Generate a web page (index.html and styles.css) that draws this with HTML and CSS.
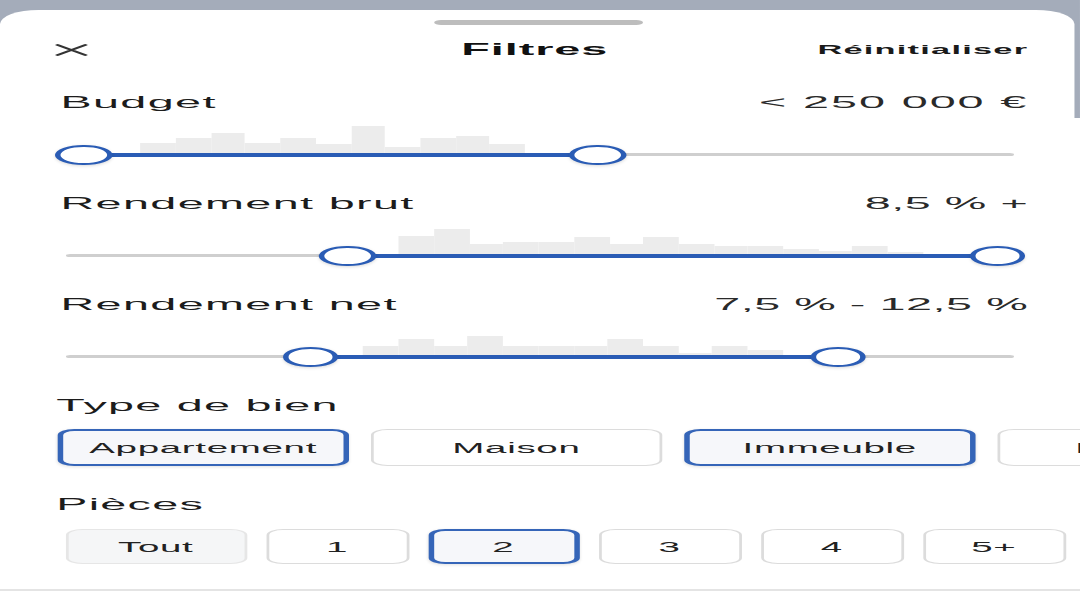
FILE: index.html
```html
<!DOCTYPE html>
<html lang="fr">
<head>
    <meta charset="UTF-8">
    <meta name="viewport" content="width=device-width, initial-scale=1.0">
    <title>Filtres</title>
    <link rel="stylesheet" href="styles.css">
</head>
<body>
    <!-- phone screen, stretched to the window width -->
    <div class="stage">
        <div class="sheet">
            <div class="grabber"></div>

            <header class="topbar">
                <button class="close" aria-label="Fermer">
                    <svg viewBox="0 0 12 12" width="12" height="12"><path d="M1 1 L11 11 M11 1 L1 11"/></svg>
                </button>
                <h1>Filtres</h1>
                <button class="reset">Réinitialiser</button>
            </header>

            <section class="filter first">
                <div class="filter-head">
                    <span class="filter-label">Budget</span>
                    <span class="filter-value money">&lt; 250 000 €</span>
                </div>
                <div class="slider">
                    <div class="rail">
                        <div class="hist" style="left:21px">
                            <i style="height:10px"></i><i style="height:15px"></i><i style="height:20px"></i><i style="height:10px"></i><i style="height:15px"></i><i style="height:9px"></i><i style="height:27px"></i><i style="height:6px"></i><i style="height:15px"></i><i style="height:17px"></i><i style="height:9px"></i>
                        </div>
                        <div class="track"></div>
                        <div class="range" style="left:0%;right:43.5%"></div>
                        <div class="thumb" style="left:0%"></div>
                        <div class="thumb" style="left:56.5%"></div>
                    </div>
                </div>
            </section>

            <section class="filter">
                <div class="filter-head">
                    <span class="filter-label">Rendement brut</span>
                    <span class="filter-value">8,5 % +</span>
                </div>
                <div class="slider">
                    <div class="rail">
                        <div class="hist" style="left:115px">
                            <i style="height:18px"></i><i style="height:25px"></i><i style="height:10px"></i><i style="height:12px"></i><i style="height:12px"></i><i style="height:17px"></i><i style="height:10px"></i><i style="height:17px"></i><i style="height:10px"></i><i style="height:8px"></i><i style="height:8px"></i><i style="height:5px"></i><i style="height:3px"></i><i style="height:8px"></i><i style="height:2px"></i>
                        </div>
                        <div class="track"></div>
                        <div class="range" style="left:29%;right:0%"></div>
                        <div class="thumb" style="left:29%"></div>
                        <div class="thumb" style="left:100.5%"></div>
                    </div>
                </div>
            </section>

            <section class="filter">
                <div class="filter-head">
                    <span class="filter-label">Rendement net</span>
                    <span class="filter-value">7,5 % - 12,5 %</span>
                </div>
                <div class="slider">
                    <div class="rail">
                        <div class="hist" style="left:102px">
                            <i style="height:9px"></i><i style="height:16px"></i><i style="height:9px"></i><i style="height:19px"></i><i style="height:9px"></i><i style="height:9px"></i><i style="height:9px"></i><i style="height:16px"></i><i style="height:9px"></i><i style="height:2px"></i><i style="height:9px"></i><i style="height:5px"></i>
                        </div>
                        <div class="track"></div>
                        <div class="range" style="left:25%;right:17%"></div>
                        <div class="thumb" style="left:25%"></div>
                        <div class="thumb" style="left:83%"></div>
                    </div>
                </div>
            </section>

            <section class="choice">
                <h2 class="choice-label">Type de bien</h2>
                <div class="chips">
                    <button class="chip wide active">Appartement</button>
                    <button class="chip wide">Maison</button>
                    <button class="chip wide active">Immeuble</button>
                    <button class="chip wide">Parking</button>
                </div>
            </section>

            <section class="choice">
                <h2 class="choice-label">Pièces</h2>
                <div class="chips rooms">
                    <button class="chip all">Tout</button>
                    <button class="chip">1</button>
                    <button class="chip active">2</button>
                    <button class="chip">3</button>
                    <button class="chip">4</button>
                    <button class="chip">5+</button>
                    <button class="chip">6+</button>
                </div>
            </section>

            <div class="divider"></div>
        </div>
    </div>
</body>
</html>
```

FILE: styles.css
```css
body {
    margin: 0;
    background: #ffffff;
    font-family: 'Liberation Sans', Arial, sans-serif;
    color: #1c1c1c;
    overflow: hidden;
}

/* the screenshot is a 393px wide phone screen stretched to 1080 */
.stage {
    width: 393px;
    height: 600px;
    transform: scaleX(2.748);
    transform-origin: 0 0;
    background: linear-gradient(#a4acba 0, #a4acba 118px, #ffffff 118px);
    padding-top: 10px;
    box-sizing: border-box;
    overflow: hidden;
}

.sheet {
    width: 391.2px;
    height: 590px;
    background: #ffffff;
    border-radius: 14px 14px 0 0;
    padding-top: 10px;
    box-sizing: border-box;
}

.grabber {
    width: 76px;
    height: 5px;
    margin: 0 auto;
    border-radius: 3px;
    background: #bdbdbd;
}

.topbar {
    display: grid;
    grid-template-columns: 1fr auto 1fr;
    align-items: center;
    height: 30px;
    margin-top: 10px;
    padding: 0 17px 0 20px;
}

.topbar h1 {
    margin: 0 5px 0 0;
    font-size: 17px;
    font-weight: bold;
    letter-spacing: 0.35px;
    color: #111;
}

.close {
    justify-self: start;
    display: flex;
    padding: 0;
    border: none;
    background: none;
}

.close svg path {
    stroke: #333;
    stroke-width: 1.7;
    stroke-linecap: round;
    fill: none;
}

.reset {
    justify-self: end;
    padding: 0;
    border: none;
    background: none;
    font-family: inherit;
    font-size: 12.5px;
    font-weight: bold;
    letter-spacing: 0.45px;
    color: #1a1a1a;
}

/* range filters */
.filter.first {
    margin-top: 28px;
}

.filter-head {
    display: flex;
    justify-content: space-between;
    height: 20px;
    line-height: 20px;
    padding: 0 17px 0 22px;
    font-size: 17px;
    letter-spacing: 0.5px;
}

.filter-value {
    color: #2a2a2a;
    letter-spacing: 0.2px;
}

.filter-value.money {
    letter-spacing: 0.7px;
}

.slider {
    height: 59px;
    margin-bottom: 22px;
    padding: 0 30px 0 30.4px;
}

.rail {
    position: relative;
    height: 100%;
}

.track {
    position: absolute;
    top: 40px;
    left: -6px;
    right: -8px;
    height: 3px;
    border-radius: 2px;
    background: #cfcfcf;
}

.range {
    position: absolute;
    top: 39.5px;
    height: 4px;
    background: #2a5cb5;
}

.hist {
    position: absolute;
    bottom: 19px;
    display: flex;
    align-items: flex-end;
}

.hist i {
    width: 12.7px;
    background: #ececec;
}

.thumb {
    position: absolute;
    top: 31.5px;
    width: 20.5px;
    height: 20px;
    margin-left: -10.25px;
    box-sizing: border-box;
    border: 2.5px solid #2a5cb5;
    border-radius: 50%;
    background: #ffffff;
    box-shadow: 0 1px 2px rgba(0, 0, 0, 0.15);
}

/* chip filters */
.choice-label {
    margin: 0;
    height: 20px;
    line-height: 20px;
    padding-left: 20.5px;
    font-size: 17px;
    font-weight: normal;
    letter-spacing: 0.45px;
}

.chips {
    display: flex;
    gap: 7.5px;
    height: 37px;
    margin: 13px 0 28.5px;
    padding-left: 20.7px;
}

.chips.rooms {
    gap: 7px;
    height: 35px;
    margin: 14.5px 0 0;
    padding-left: 23.7px;
}

.chip {
    flex-shrink: 0;
    width: 52px;
    padding: 0;
    box-sizing: border-box;
    border: 1px solid #dcdcdc;
    border-radius: 6px;
    background: #ffffff;
    font-family: inherit;
    font-size: 14px;
    letter-spacing: 0.25px;
    color: #222;
}

.chip.wide {
    width: 106.5px;
}

.chip.all {
    width: 66px;
    background: #f5f6f7;
    border-color: #e6e6e6;
}

.chip.active {
    border: 2px solid #3565b8;
    background: #f6f7fa;
    box-shadow: 0 1px 2px rgba(0, 0, 0, 0.12);
}

.rooms .chip.active {
    width: 55px;
}

.divider {
    width: 393px;
    height: 2px;
    margin-top: 25px;
    background: #e4e4e4;
}
```
